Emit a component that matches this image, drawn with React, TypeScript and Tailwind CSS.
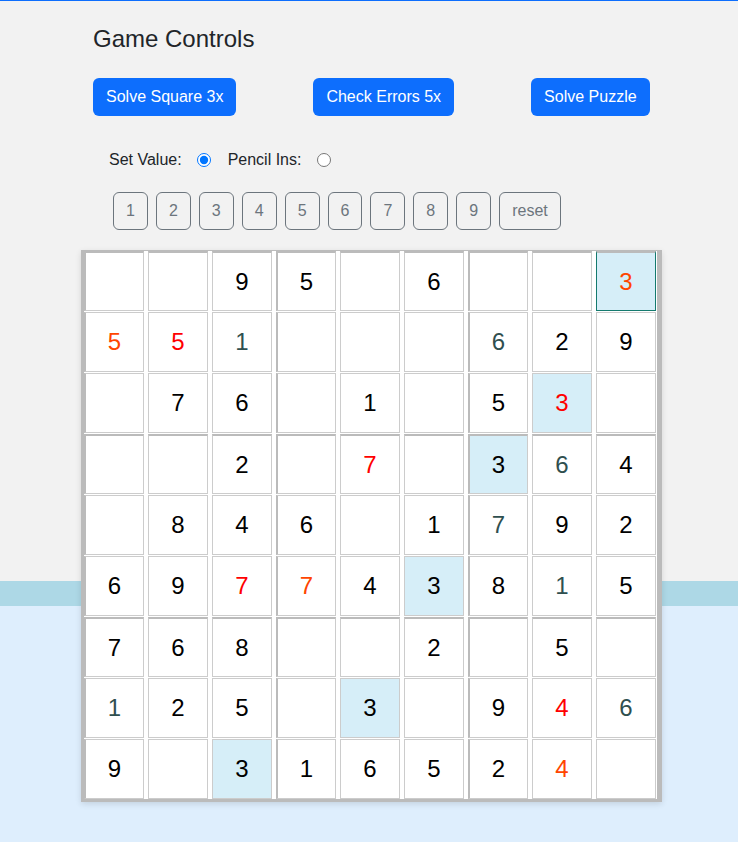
import React from "react";

const grid: string[][] = [
  ["", "", "9k", "5k", "", "6k", "", "", "3o!"],
  ["5o", "5r", "1s", "", "", "", "6s", "2k", "9k"],
  ["", "7k", "6k", "", "1k", "", "5k", "3r*", ""],
  ["", "", "2k", "", "7r", "", "3k*", "6s", "4k"],
  ["", "8k", "4k", "6k", "", "1k", "7s", "9k", "2k"],
  ["6k", "9k", "7r", "7o", "4k", "3k*", "8k", "1s", "5k"],
  ["7k", "6k", "8k", "", "", "2k", "", "5k", ""],
  ["1s", "2k", "5k", "", "3k*", "", "9k", "4r", "6s"],
  ["9k", "", "3k*", "1k", "6k", "5k", "2k", "4o", ""],
];

function colorClass(c: string): string {
  if (c === "r") return "text-[#ff0000]";
  if (c === "o") return "text-[#ff4500]";
  if (c === "s") return "text-[#2f4f4f]";
  return "text-black";
}

function Cell({ v, r, c }: { v: string; r: number; c: number }) {
  const digit = v ? v[0] : "";
  const col = v ? v[1] : "k";
  const hl = v.includes("*") || v.includes("!");
  const sel = v.includes("!");
  let cls =
    "flex h-[60px] w-[60px] items-center justify-center border text-[24px] ";
  cls += sel ? "border-[#147a6e] " : "border-[#cccccc] ";
  if (c % 3 === 0) cls += "border-l-2 border-l-[#bbbbbb] ";
  if (r % 3 === 0) cls += "border-t-2 border-t-[#bbbbbb] ";
  cls += hl ? "bg-[#d6eef8] " : "bg-white ";
  cls += colorClass(col);
  return <div className={cls}>{digit}</div>;
}

export default function App() {
  return (
    <div
      className="min-h-[842px] w-full border-t border-[#0d6efd] bg-[linear-gradient(to_bottom,#f2f2f2_0px,#f2f2f2_580px,#add8e6_580px,#add8e6_605px,#deeefd_605px)] text-[#212529]"
      style={{ fontFamily: '"Liberation Sans", Arial, sans-serif' }}
    >
      <div className="flex flex-col items-start pl-[81px] pt-[23px]">
        <h2 className="ml-[12px] text-[24px] font-normal leading-[29px]">
          Game Controls
        </h2>
        <div className="ml-[12px] mt-[25px] flex gap-[77px]">
          {["Solve Square 3x", "Check Errors 5x", "Solve Puzzle"].map((t) => (
            <button
              key={t}
              className="h-[38px] rounded-[6px] bg-[#0d6efd] px-[13px] text-[16px] leading-[24px] text-white"
            >
              {t}
            </button>
          ))}
        </div>
        <div className="ml-[28px] mt-[32px] flex h-[24px] items-center text-[16px]">
          <span>Set Value:</span>
          <input
            type="radio"
            name="mode"
            defaultChecked
            className="m-0 ml-[15px] h-[14px] w-[14px]"
          />
          <span className="ml-[17px]">Pencil Ins:</span>
          <input
            type="radio"
            name="mode"
            className="m-0 ml-[16px] h-[14px] w-[14px]"
          />
        </div>
        <div className="ml-[32px] mt-[20px] flex gap-[8px]">
          {["1", "2", "3", "4", "5", "6", "7", "8", "9", "reset"].map((t) => (
            <button
              key={t}
              className="h-[38px] rounded-[6px] border border-[#6c757d] px-[12px] text-[16px] leading-[24px] text-[#6c757d]"
            >
              {t}
            </button>
          ))}
        </div>
        <div className="mt-[20px] flex flex-col gap-[1px] border-b-[3px] border-l-[3px] border-r-[5px] border-t border-[#bbbbbb] bg-white pr-[1px] shadow-[0_2px_6px_rgba(0,0,0,0.12)]">
          {grid.map((row, r) => (
            <div key={r} className="flex gap-[4px]">
              {row.map((v, c) => (
                <Cell key={c} v={v} r={r} c={c} />
              ))}
            </div>
          ))}
        </div>
      </div>
    </div>
  );
}
